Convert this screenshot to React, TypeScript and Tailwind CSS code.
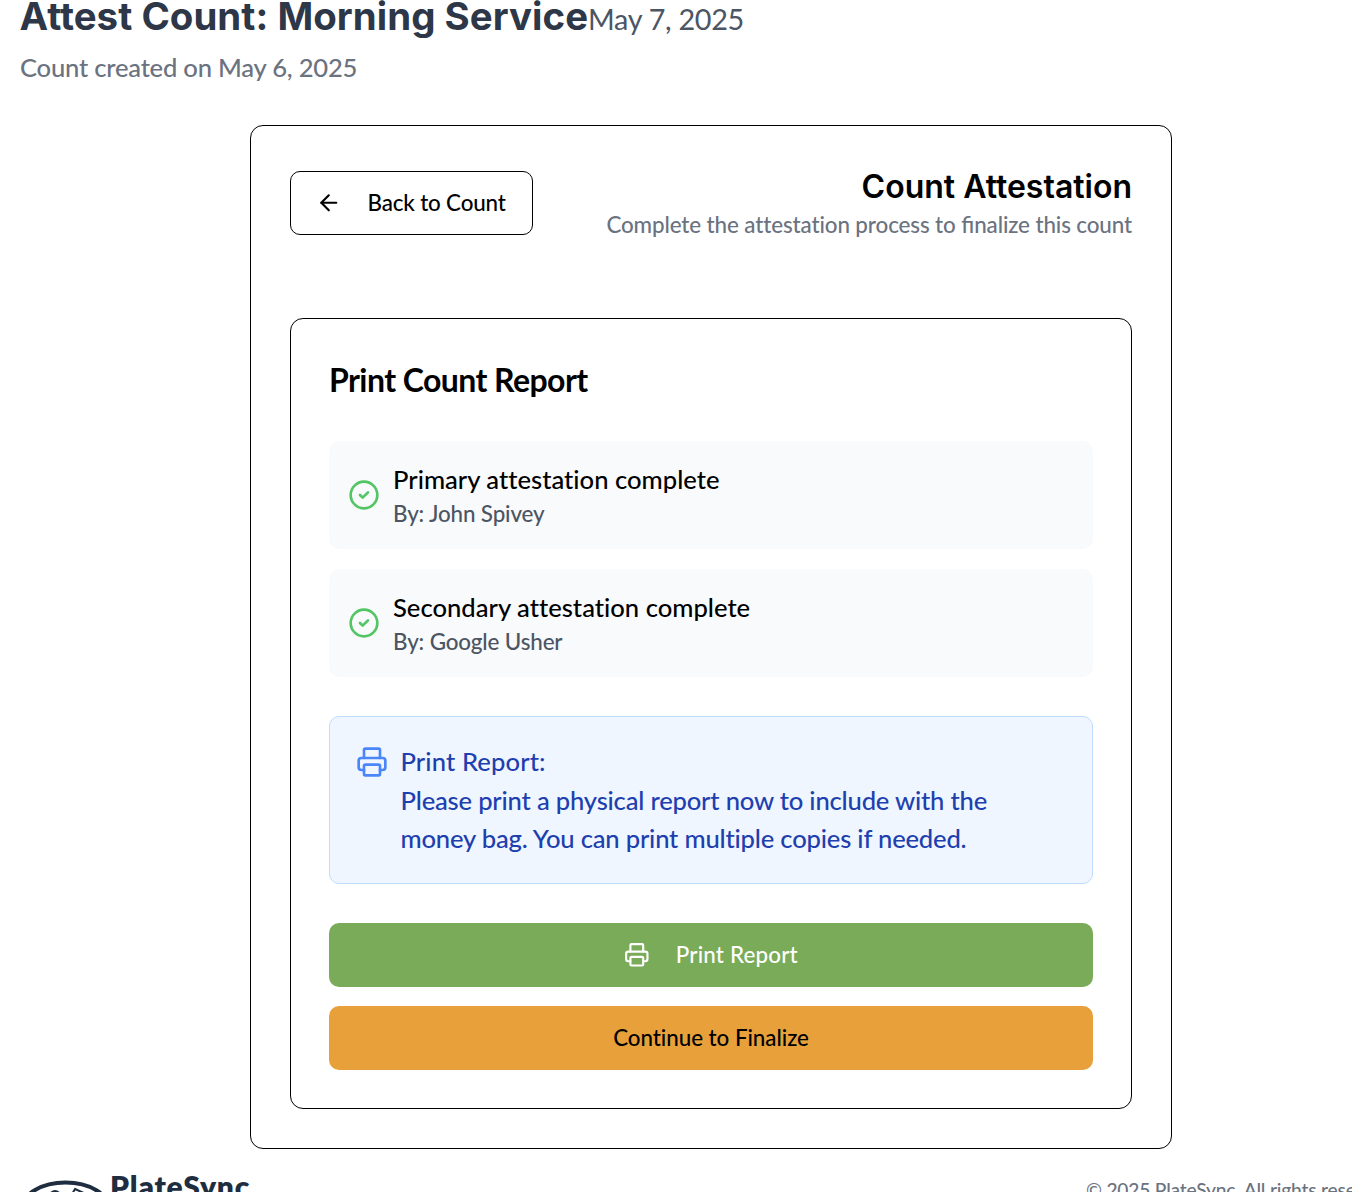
import React from "react";
import { ArrowLeft, CircleCheck, Printer } from "lucide-react";

function AttestationRow({ title, name }: { title: string; name: string }) {
  return (
    <div className="flex h-[108px] items-center rounded-[10px] bg-[#f9fafc] pl-[19px]">
      <CircleCheck className="mr-[13px] size-8 shrink-0 text-[#53c565]" />
      <div className="-mt-px">
        <p className="text-[25.6px] leading-[38px] tracking-[0.01px] text-black">{title}</p>
        <p className="mt-px text-[22.4px] leading-[30px] tracking-[-0.14px] text-[#4b5563]">By: {name}</p>
      </div>
    </div>
  );
}

function PlateLogo() {
  return (
    <svg className="h-[60px] w-[90px]" viewBox="0 0 90 60" fill="none" stroke="#1f2d40">
      <ellipse cx="45.5" cy="28" rx="43" ry="25.5" strokeWidth="4" />
      <circle cx="35" cy="16" r="6" fill="#1f2d40" stroke="none" />
      <path d="M55 9l11 5-5 12-13-5z" strokeWidth="2" />
    </svg>
  );
}

export default function App() {
  return (
    <div className="flex h-[1192px] w-[1352px] flex-col overflow-hidden bg-white font-['Lato',sans-serif] font-medium [font-variant-ligatures:none]">
      <header className="h-[125px] shrink-0 pl-5">
        <div className="-mt-[9px] flex h-[51px] items-baseline whitespace-nowrap">
          <h1 className="-ml-[0.5px] font-['Inter',sans-serif] text-[38.4px] leading-[51px] font-bold tracking-[0.05px] text-[#2d3748]">
            Attest Count: Morning Service
          </h1>
          <span className="text-[28.8px] font-normal tracking-[-0.3px] text-[#4b5563]">May 7, 2025</span>
        </div>
        <p className="mt-[6px] text-[25.6px] leading-[38px] tracking-[-0.22px] text-[#6b7280]">
          Count created on May 6, 2025
        </p>
      </header>

      <main className="ml-[250px] flex h-[1024px] w-[922px] shrink-0 flex-col rounded-[13px] border border-black px-[39px] pt-[39px]">
        <div className="flex h-[153px] shrink-0 items-start justify-between">
          <button className="mt-[6px] flex h-16 w-[243px] items-center rounded-[10px] border border-black pl-[25px] text-[22.4px] tracking-[-0.17px] whitespace-nowrap text-black">
            <ArrowLeft className="mr-[26px] size-[25.6px]" />
            Back to Count
          </button>
          <div className="text-right">
            <h2 className="font-['Inter',sans-serif] text-[32px] leading-[44px] font-semibold text-black">
              Count Attestation
            </h2>
            <p className="text-[22.4px] leading-8 tracking-[-0.11px] text-[#6b7280]">
              Complete the attestation process to{" "}
              <span className="tracking-normal [font-variant-ligatures:common-ligatures]">fi</span>nalize this count
            </p>
          </div>
        </div>

        <section className="flex h-[791px] shrink-0 flex-col rounded-[13px] border border-black px-[38px] pt-[38px]">
          <h3 className="text-[32px] leading-[45px] font-bold tracking-[-0.57px] text-black">
            Print Count Report
          </h3>
          <div className="mt-[39px] flex flex-col gap-5">
            <AttestationRow title="Primary attestation complete" name="John Spivey" />
            <AttestationRow title="Secondary attestation complete" name="Google Usher" />
          </div>
          <div className="mt-[39px] flex h-[168px] items-start rounded-[10px] border border-[#bfdbfe] bg-[#eff6ff] pt-[25px] pl-[26px] text-[25.6px] leading-[38.4px] text-[#1e40af]">
            <Printer className="mt-[4px] mr-[12.5px] size-8 shrink-0 text-[#4a86f7]" />
            <div>
              <p className="tracking-[0.12px]">Print Report:</p>
              <p className="mt-[0.4px] w-[640px] tracking-[-0.19px]">
                Please print a physical report now to include with the money bag. You can print multiple copies if
                needed.
              </p>
            </div>
          </div>
          <button className="mt-[39px] flex h-16 shrink-0 items-center justify-center gap-[26px] rounded-[10px] bg-[#7aab58] text-[22.4px] tracking-[0.17px] text-white">
            <Printer className="size-[25.6px]" />
            Print Report
          </button>
          <button className="mt-[19px] h-16 shrink-0 rounded-[10px] bg-[#e8a13a] text-[22.4px] tracking-[-0.05px] text-black">
            Continue to Finalize
          </button>
        </section>
      </main>

      <footer className="flex h-[43px] shrink-0 items-start justify-between overflow-hidden pl-5 whitespace-nowrap">
        <div className="flex items-start">
          <div className="mt-[31px]">
            <PlateLogo />
          </div>
          <span className="mt-[20px] text-[30px] leading-[34px] font-extrabold tracking-[0.75px] text-[#1f2d40]">
            PlateSync
          </span>
        </div>
        <p className="mt-[27px] w-[266px] text-[19.2px] leading-[28px] tracking-[-0.19px] text-[#6b7280]">
          © 2025 PlateSync. All rights reserved.
        </p>
      </footer>
    </div>
  );
}
